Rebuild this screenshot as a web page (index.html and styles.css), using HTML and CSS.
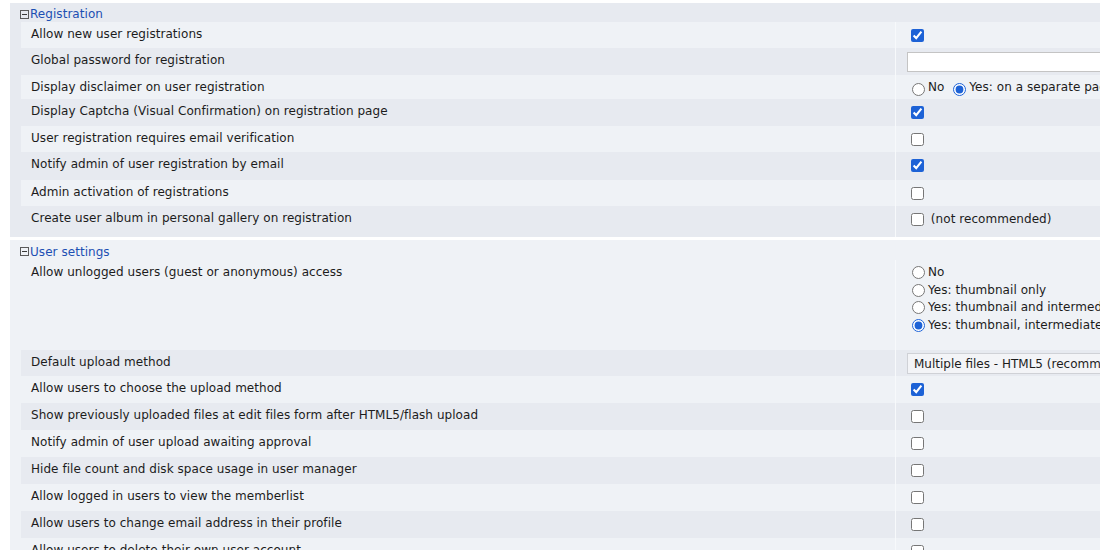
FILE: index.html
```html
<!DOCTYPE html>
<html lang="en">
<head>
<meta charset="utf-8">
<title>Config</title>
<link rel="stylesheet" href="styles.css">
</head>
<body>
<div class="page">
  <section class="section section-dark">
    <div class="sec-head"><span class="toggle"></span>Registration</div>
    <div class="row light h26"><div class="label">Allow new user registrations</div><div class="value"><input type="checkbox" checked></div></div>
    <div class="row dark"><div class="label">Global password for registration</div><div class="value"><input type="text" class="textbox"></div></div>
    <div class="row light h24"><div class="label">Display disclaimer on user registration</div><div class="value"><label class="opt"><input type="radio" name="disc">No</label> <label class="opt"><input type="radio" name="disc" checked>Yes: on a separate page</label></div></div>
    <div class="row dark"><div class="label">Display Captcha (Visual Confirmation) on registration page</div><div class="value"><input type="checkbox" checked></div></div>
    <div class="row light h26"><div class="label">User registration requires email verification</div><div class="value"><input type="checkbox"></div></div>
    <div class="row dark h28"><div class="label">Notify admin of user registration by email</div><div class="value"><input type="checkbox" checked></div></div>
    <div class="row light h26"><div class="label">Admin activation of registrations</div><div class="value"><input type="checkbox"></div></div>
    <div class="row dark h31"><div class="label">Create user album in personal gallery on registration</div><div class="value"><label class="opt"><input type="checkbox"> (not recommended)</label></div></div>
  </section>
  <section class="section section-light">
    <div class="sec-head"><span class="toggle"></span>User settings</div>
    <div class="row light h90"><div class="label">Allow unlogged users (guest or anonymous) access</div><div class="value stack">
      <label class="opt"><input type="radio" name="guest">No</label>
      <label class="opt"><input type="radio" name="guest">Yes: thumbnail only</label>
      <label class="opt"><input type="radio" name="guest">Yes: thumbnail and intermediate only</label>
      <label class="opt"><input type="radio" name="guest" checked>Yes: thumbnail, intermediate and full size</label>
    </div></div>
    <div class="row dark h26"><div class="label">Default upload method</div><div class="value"><select class="selectbox"><option>Multiple files - HTML5 (recommended)</option></select></div></div>
    <div class="row light"><div class="label">Allow users to choose the upload method</div><div class="value"><input type="checkbox" checked></div></div>
    <div class="row dark"><div class="label">Show previously uploaded files at edit files form after HTML5/flash upload</div><div class="value"><input type="checkbox"></div></div>
    <div class="row light"><div class="label">Notify admin of user upload awaiting approval</div><div class="value"><input type="checkbox"></div></div>
    <div class="row dark"><div class="label">Hide file count and disk space usage in user manager</div><div class="value"><input type="checkbox"></div></div>
    <div class="row light"><div class="label">Allow logged in users to view the memberlist</div><div class="value"><input type="checkbox"></div></div>
    <div class="row dark"><div class="label">Allow users to change email address in their profile</div><div class="value"><input type="checkbox"></div></div>
    <div class="row light"><div class="label">Allow users to delete their own user account</div><div class="value"><input type="checkbox"></div></div>
  </section>
</div>
</body>
</html>
```

FILE: styles.css
```css
html, body {
  margin: 0;
  padding: 0;
  background: #ffffff;
  overflow: hidden;
}
body {
  font-family: "DejaVu Sans", sans-serif;
  font-size: 12px;
  letter-spacing: 0.05px;
  color: #1c1c1c;
}
input[type="checkbox"], input[type="radio"] {
  accent-color: #1d62d6;
}
.page {
  padding-top: 3px;
  margin-left: 10px;
  width: 1300px;
}
.section {
  margin-bottom: 3px;
  padding-left: 11px;
}
.section-dark { background: #e7eaf0; }
.section-light { background: #eff2f6; }
.sec-head {
  box-sizing: border-box;
  height: 19px;
  padding-top: 3px;
  line-height: 16px;
  margin-left: -1px;
  color: #1d4fb3;
  display: flex;
  align-items: center;
}
.section-light .sec-head { height: 20px; }
.toggle {
  width: 7px;
  height: 7px;
  border: 1px solid #5a5a5a;
  margin-right: 1px;
  position: relative;
  flex: none;
}
.toggle::after {
  content: "";
  position: absolute;
  left: 1px;
  right: 1px;
  top: 3px;
  height: 1px;
  background: #3a3a3a;
}
.row {
  display: grid;
  grid-template-columns: 875px 1fr;
  height: 27px;
}
.row.h24 { height: 24px; }
.row.h26 { height: 26px; }
.row.h28 { height: 28px; }
.row.h31 { height: 31px; }
.row.h90 { height: 90px; }
.light { background: #eff2f6; }
.dark { background: #e7eaf0; }
.label {
  padding: 4px 10px 0;
  line-height: 16px;
  border-right: 1px solid #f7f9fb;
}
.value {
  padding: 4px 11px 0;
  line-height: 16px;
  white-space: nowrap;
}
.value input[type="checkbox"] {
  margin: 3px 3px 3px 4px;
  vertical-align: middle;
}
.value input[type="radio"] {
  margin: 3px 3px 0 5px;
  vertical-align: -5px;
}
.stack {
  display: flex;
  flex-direction: column;
  padding-top: 5px;
}
.stack .opt {
  height: 17.5px;
  line-height: 15px;
}
.stack input[type="radio"] {
  margin: 0 3px 0 5px;
  vertical-align: -3px;
}
.textbox {
  box-sizing: border-box;
  width: 260px;
  height: 20px;
  margin: 0;
  border: 1px solid #c4c4c4;
  background: #fff;
  font: inherit;
}
.selectbox {
  box-sizing: border-box;
  height: 21px;
  margin: -1px 0 0 0;
  border: 1px solid #cfd1d6;
  background: #f3f4f7;
  font: inherit;
  color: #1c1c1c;
  padding: 0 2px;
}
```
